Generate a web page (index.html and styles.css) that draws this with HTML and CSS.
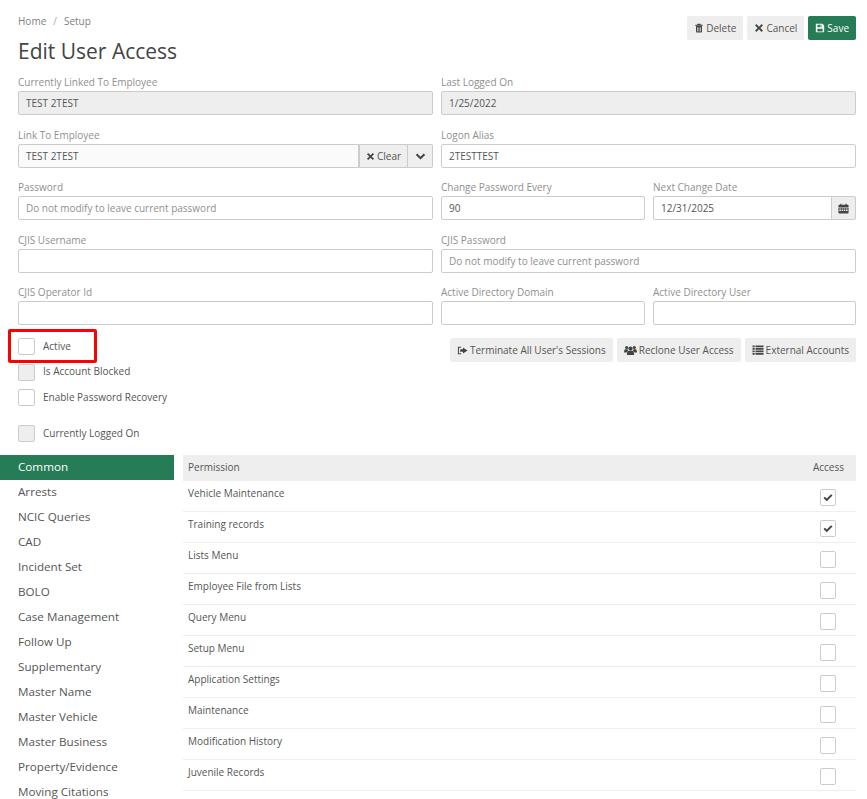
FILE: index.html
```html
<!DOCTYPE html>
<html lang="en">
<head>
<meta charset="utf-8">
<title>Edit User Access</title>
<link rel="stylesheet" href="styles.css">
</head>
<body>
<svg class="defs" width="0" height="0" aria-hidden="true">
  <symbol id="i-times" viewBox="0 0 12 12"><path d="M2.9 1.3 6 4.4l3.1-3.1 1.6 1.6L7.6 6l3.1 3.1-1.6 1.6L6 7.6l-3.1 3.1-1.6-1.6L4.400 6 1.3 2.9z"/></symbol>
  <symbol id="i-trash" viewBox="0 0 12 12"><path d="M4.3 .8h3.4l.6 1.2h2.200v1.200H1.500V2h2.200zM2.400 3.700h7.200v6.800c0 .5-.4.900-.9.900H3.300c-.5 0-.9-.4-.9-.9zM4 5v5.200h.8V5zm1.600 0v5.200h.8V5zm1.600 0v5.200H8V5z"/></symbol>
  <symbol id="i-save" viewBox="0 0 12 12"><path fill-rule="evenodd" d="M1.500 1h7.400l2.100 2.100v7c0 .5-.4.900-.9.900H1.900c-.5 0-.9-.4-.9-.9V1.500c0-.3.2-.5.500-.5zM3 2v3h5V2zm3.500.4h1v2.200h-1zM2.800 7v3.200h6.400V7z"/></symbol>
  <symbol id="i-chev" viewBox="0 0 12 12"><path d="M6 9.400 .9 4.300l1.600-1.600L6 6.200l3.500-3.500 1.600 1.600z"/></symbol>
  <symbol id="i-cal" viewBox="0 0 12 12"><path fill-rule="evenodd" d="M2.500 .8h1.300v1h4.400v-1h1.300v1h1.200c.4 0 .8.400.8.800v1.700H.500V2.600c0-.4.400-.8.800-.8h1.200zM.500 5h11v5.700c0 .4-.4.800-.8.800H1.300c-.4 0-.8-.4-.8-.8zm1 .9V7h1.700V5.900zm2.500 0V7h1.600V5.900zm2.400 0V7H8V5.900zm2.400 0V7h1.700V5.900zM1.500 7.700v1.100h1.700V7.700zm2.500 0v1.100h1.600V7.700zm2.400 0v1.100H8V7.700zm2.400 0v1.100h1.700V7.700z"/></symbol>
  <symbol id="i-out" viewBox="0 0 12 12"><path d="M6.500 2.800 11.500 6l-5 3.200V7.400H3.500V4.600h3zM1 2h3.500v1.100H2.100v5.800h2.400V10H1z"/></symbol>
  <symbol id="i-users" viewBox="0 0 14 12"><circle cx="7" cy="3.900" r="2.300"/><circle cx="2.800" cy="2.800" r="1.700"/><circle cx="11.200" cy="2.800" r="1.700"/><path d="M3.500 7.500c.4-1 1.200-1.300 2-1.300h3c.8 0 1.600.3 2 1.300l.5 3.300H3zM0 7c0-1.700.8-2.400 1.800-2.400h1.900c.1.700.3 1.200.8 1.600-.9.300-1.500 1-1.700 2H0zM14 7c0-1.700-.8-2.400-1.800-2.400h-1.900c-.1.700-.3 1.200-.8 1.600.9.300 1.500 1 1.700 2H14z"/></symbol>
  <symbol id="i-list" viewBox="0 0 12 12"><path d="M.5 1.500h2.200v1.800H.5zm3 0h8v1.800h-8zM.5 4h2.200v1.800H.5zm3 0h8v1.800h-8zM.5 6.500h2.200v1.800H.5zm3 0h8v1.800h-8zM.5 9h2.200v1.800H.5zm3 0h8v1.800h-8z"/></symbol>
  <symbol id="i-check" viewBox="0 0 12 12"><path d="M4.500 10 .6 6.100l1.700-1.700 2.200 2.200 5.200-5.200 1.700 1.700z"/></symbol>
</svg>

<div class="page">
  <header class="topbar">
    <div class="titles">
      <nav class="crumbs"><span>Home</span><span class="sep">/</span><span>Setup</span></nav>
      <h1>Edit User Access</h1>
    </div>
    <div class="btns">
      <button class="btn"><svg class="ic"><use href="#i-trash"/></svg>Delete</button>
      <button class="btn"><svg class="ic"><use href="#i-times"/></svg>Cancel</button>
      <button class="btn primary"><svg class="ic"><use href="#i-save"/></svg>Save</button>
    </div>
  </header>

  <section class="form">
    <div class="row">
      <div class="field"><label>Currently Linked To Employee</label><div class="input ro">TEST 2TEST</div></div>
      <div class="field"><label>Last Logged On</label><div class="input ro">1/25/2022</div></div>
    </div>
    <div class="row short">
      <div class="field"><label>Link To Employee</label>
        <div class="group">
          <div class="input soft">TEST 2TEST</div>
          <button class="add clear"><svg class="ic"><use href="#i-times"/></svg>Clear</button>
          <button class="add chev"><svg class="ic"><use href="#i-chev"/></svg></button>
        </div>
      </div>
      <div class="field"><label>Logon Alias</label><div class="input">2TESTTEST</div></div>
    </div>
    <div class="row">
      <div class="field"><label>Password</label><div class="input ph">Do not modify to leave current password</div></div>
      <div class="split">
        <div class="field"><label>Change Password Every</label><div class="input">90</div></div>
        <div class="field"><label>Next Change Date</label>
          <div class="group">
            <div class="input">12/31/2025</div>
            <button class="add cal"><svg class="ic"><use href="#i-cal"/></svg></button>
          </div>
        </div>
      </div>
    </div>
    <div class="row short">
      <div class="field"><label>CJIS Username</label><div class="input"></div></div>
      <div class="field"><label>CJIS Password</label><div class="input ph">Do not modify to leave current password</div></div>
    </div>
    <div class="row last">
      <div class="field"><label>CJIS Operator Id</label><div class="input"></div></div>
      <div class="split">
        <div class="field"><label>Active Directory Domain</label><div class="input"></div></div>
        <div class="field"><label>Active Directory User</label><div class="input"></div></div>
      </div>
    </div>
  </section>

  <section class="options">
    <div class="checks">
      <div class="check marked"><span class="box"></span><span class="cap">Active</span></div>
      <div class="check"><span class="box off"></span><span class="cap">Is Account Blocked</span></div>
      <div class="check"><span class="box"></span><span class="cap">Enable Password Recovery</span></div>
      <div class="check gap"><span class="box off"></span><span class="cap">Currently Logged On</span></div>
    </div>
    <div class="actions">
      <button class="btn"><svg class="ic big"><use href="#i-out"/></svg>Terminate All User's Sessions</button>
      <button class="btn"><svg class="ic wide"><use href="#i-users"/></svg>Reclone User Access</button>
      <button class="btn"><svg class="ic lg"><use href="#i-list"/></svg>External Accounts</button>
    </div>
  </section>

  <section class="perm">
    <ul class="side">
      <li class="on">Common</li>
      <li>Arrests</li>
      <li>NCIC Queries</li>
      <li>CAD</li>
      <li>Incident Set</li>
      <li>BOLO</li>
      <li>Case Management</li>
      <li>Follow Up</li>
      <li>Supplementary</li>
      <li>Master Name</li>
      <li>Master Vehicle</li>
      <li>Master Business</li>
      <li>Property/Evidence</li>
      <li>Moving Citations</li>
    </ul>
    <div class="table">
      <div class="thead"><span>Permission</span><span class="acc">Access</span></div>
      <div class="tr"><span>Vehicle Maintenance</span><span class="box sm"><svg class="tick"><use href="#i-check"/></svg></span></div>
      <div class="tr"><span>Training records</span><span class="box sm"><svg class="tick"><use href="#i-check"/></svg></span></div>
      <div class="tr"><span>Lists Menu</span><span class="box sm"></span></div>
      <div class="tr"><span>Employee File from Lists</span><span class="box sm"></span></div>
      <div class="tr"><span>Query Menu</span><span class="box sm"></span></div>
      <div class="tr"><span>Setup Menu</span><span class="box sm"></span></div>
      <div class="tr"><span>Application Settings</span><span class="box sm"></span></div>
      <div class="tr"><span>Maintenance</span><span class="box sm"></span></div>
      <div class="tr"><span>Modification History</span><span class="box sm"></span></div>
      <div class="tr"><span>Juvenile Records</span><span class="box sm"></span></div>
    </div>
  </section>
</div>
</body>
</html>
```
FILE: styles.css
```css
*, *::after { box-sizing: border-box; }
html, body { margin: 0; height: 799px; overflow: hidden; background: #fff; }
body { font-family: "Open Sans", "Liberation Sans", sans-serif; font-size: 10px; color: #555; }
.defs { position: absolute; }
.page { padding: 16px 11px 0 18px; }

.topbar { display: flex; justify-content: space-between; align-items: flex-start; height: 60px; }
.crumbs { display: flex; gap: 7px; line-height: 12px; margin-top: -1px; color: #808080; }
.crumbs .sep { color: #aaa; }
h1 { margin: 9px 0 0; font-size: 21px; line-height: 30px; font-weight: 400; color: #444; }
.btns { display: flex; gap: 4px; }

.btn { display: inline-flex; align-items: center; height: 24px; padding: 0 7px; border: 0; border-radius: 2px; background: #eee; color: #555; font: inherit; white-space: nowrap; }
.btn .ic { width: 10px; height: 10px; margin-right: 2px; fill: #444; flex: none; }
.btn .ic.big { width: 11px; height: 11px; }
.btn .ic.wide { width: 13px; height: 11px; }
.btn .ic.lg { width: 12px; height: 12px; }
.btn.primary { background: #267c56; color: #fff; }
.btn.primary .ic { fill: #fff; }

.form { display: flex; flex-direction: column; }
.row { display: grid; grid-template-columns: 415px 415px; gap: 8px; height: 53px; }
.row.short { height: 52px; }
.row.last { height: 40px; }
.split { display: grid; grid-template-columns: 204px 203px; gap: 8px; }
.field { min-width: 0; }
label { display: block; height: 13px; margin-bottom: 2px; line-height: 13px; color: #8f8f8f; white-space: nowrap; }
.input { flex: 1; min-width: 0; height: 24px; padding: 0 7px; border: 1px solid #ccc; border-radius: 2px; background: #fff; line-height: 23px; color: #555; }
.input.ro { background: #eee; }
.input.soft { background: #fafafa; }
.input.ph { color: #8f8f8f; }
.group { display: flex; height: 24px; }
.group .input { border-radius: 2px 0 0 2px; }
.add { display: inline-flex; align-items: center; justify-content: center; height: 24px; padding: 0; border: 1px solid #ccc; border-left: 0; background: #eee; color: #555; font: inherit; }
.add .ic { fill: #444; }
.clear { width: 49px; border-left: 1px solid #ccc; gap: 2px; }
.clear .ic { width: 9px; height: 9px; }
.chev { width: 25px; border-radius: 0 2px 2px 0; }
.chev .ic { width: 11px; height: 11px; }
.cal { width: 25px; border-left: 1px solid #ccc; border-radius: 0 2px 2px 0; margin-left: -1px; }
.cal .ic { width: 11px; height: 11px; }

.options { display: flex; justify-content: space-between; align-items: flex-start; height: 129px; }
.checks { display: flex; flex-direction: column; padding-top: 12px; }
.check { display: flex; align-items: center; gap: 8px; height: 17px; margin-bottom: 8.5px; color: #555; }
.check .cap { margin-top: -2px; }
.check.gap { margin-top: 10.5px; }
.check.marked { position: relative; }
.check.marked::after { content: ""; position: absolute; left: -10px; top: -9px; width: 89px; height: 34px; border: 3px solid #f00; border-radius: 2px; }
.box { display: inline-flex; align-items: center; justify-content: center; width: 17px; height: 17px; border: 1px solid #ccc; border-radius: 2px; background: #fff; flex: none; }
.box.off { background: #eee; }
.box.sm { width: 16px; height: 17px; }
.tick { width: 10px; height: 10px; fill: #444; }
.actions { display: flex; gap: 4px; padding-top: 12px; }

.perm { display: flex; gap: 9px; margin-left: -18px; }
.side { list-style: none; margin: 0; padding: 0; width: 174px; flex: none; }
.side li { height: 25px; padding-left: 18px; font-size: 11.67px; line-height: 23px; color: #555; }
.side li.on { background: #267c56; color: #fff; }
.table { flex: 1; }
.thead { display: flex; justify-content: space-between; align-items: center; height: 26px; padding: 0 12px 2px 5px; background: #eee; color: #555; }
.tr { display: flex; justify-content: space-between; align-items: flex-start; height: 31px; padding: 6px 20px 0 5px; border-bottom: 1px solid #eee; line-height: 12px; color: #555; }
.tr .box { margin-top: 2px; }
```
